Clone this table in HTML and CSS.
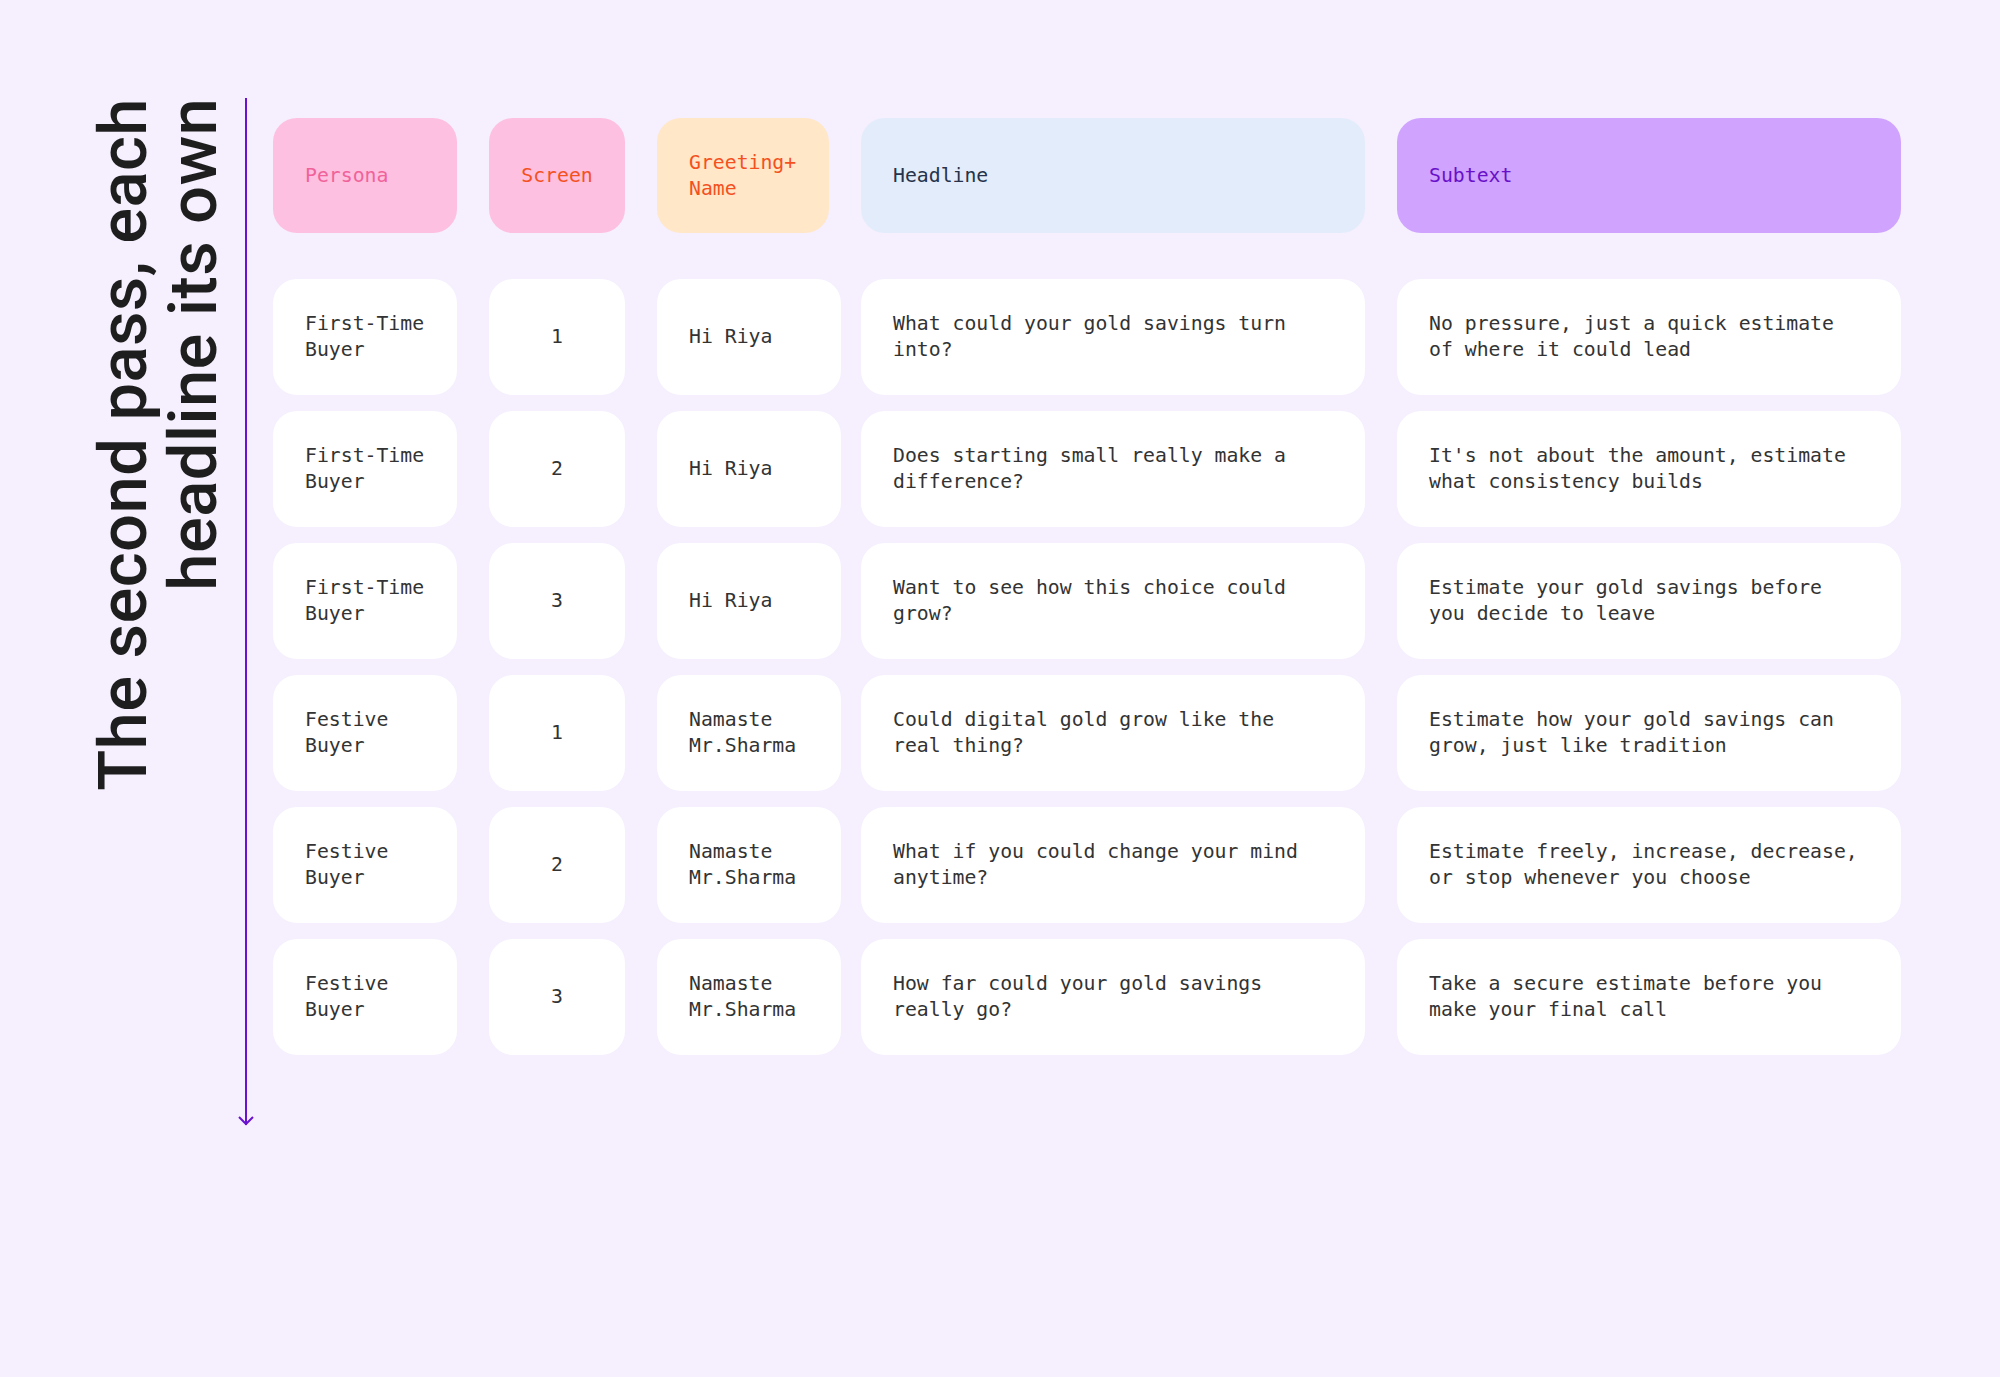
FILE: index.html
```html
<!DOCTYPE html>
<html lang="en">
<head>
<meta charset="utf-8">
<title>The second pass, each headline its own</title>
<link rel="stylesheet" href="styles.css">
</head>
<body>
<main class="page">
  <h1 class="title">The second pass, each<br>headline its own</h1>
  <svg class="axis" width="16" height="1030" viewBox="0 0 16 1030" aria-hidden="true">
    <line x1="8" y1="0" x2="8" y2="1027" stroke="#6A12CF" stroke-width="2"/>
    <polyline points="1,1019 8,1026 15,1019" fill="none" stroke="#6A12CF" stroke-width="2"/>
  </svg>
  <section class="table">
    <div class="grid head">
      <div class="cell h-persona">Persona</div>
      <div class="cell center h-screen">Screen</div>
      <div class="cell h-greet">Greeting+ Name</div>
      <div class="cell h-headline">Headline</div>
      <div class="cell h-subtext">Subtext</div>
    </div>
    <div class="grid body">
      <div class="cell">First-Time Buyer</div>
      <div class="cell center">1</div>
      <div class="cell greet">Hi Riya</div>
      <div class="cell wide">What could your gold savings turn into?</div>
      <div class="cell wide">No pressure, just a quick estimate of where it could lead</div>

      <div class="cell">First-Time Buyer</div>
      <div class="cell center">2</div>
      <div class="cell greet">Hi Riya</div>
      <div class="cell wide">Does starting small really make a difference?</div>
      <div class="cell wide">It's not about the amount, estimate what consistency builds</div>

      <div class="cell">First-Time Buyer</div>
      <div class="cell center">3</div>
      <div class="cell greet">Hi Riya</div>
      <div class="cell wide">Want to see how this choice could grow?</div>
      <div class="cell wide">Estimate your gold savings before you decide to leave</div>

      <div class="cell">Festive Buyer</div>
      <div class="cell center">1</div>
      <div class="cell greet">Namaste Mr.Sharma</div>
      <div class="cell wide">Could digital gold grow like the real thing?</div>
      <div class="cell wide">Estimate how your gold savings can grow, just like tradition</div>

      <div class="cell">Festive Buyer</div>
      <div class="cell center">2</div>
      <div class="cell greet">Namaste Mr.Sharma</div>
      <div class="cell wide">What if you could change your mind anytime?</div>
      <div class="cell wide">Estimate freely, increase, decrease, or stop whenever you choose</div>

      <div class="cell">Festive Buyer</div>
      <div class="cell center">3</div>
      <div class="cell greet">Namaste Mr.Sharma</div>
      <div class="cell wide">How far could your gold savings really go?</div>
      <div class="cell wide">Take a secure estimate before you make your final call</div>
    </div>
  </section>
</main>
</body>
</html>
```
FILE: styles.css
```css
html, body {
  margin: 0;
  padding: 0;
  background: #F5EFFE;
}
body {
  width: 2000px;
  height: 1377px;
  overflow: hidden;
}
.page {
  display: flex;
  align-items: flex-start;
  padding: 98px 0 0 88px;
}
.title {
  margin: 0;
  writing-mode: vertical-rl;
  transform: rotate(180deg);
  text-align: end;
  font-family: Roboto, "Liberation Sans", sans-serif;
  font-weight: 500;
  font-size: 67px;
  line-height: 70px;
  letter-spacing: 0.4px;
  color: #1E1E1E;
  white-space: nowrap;
}
.axis {
  display: block;
  margin-left: 10px;
}
.table {
  margin-left: 19px;
  margin-top: 20px;
}
.grid {
  display: grid;
  grid-template-columns: 184px 136px 172px 504px 504px;
  column-gap: 32px;
}
.head {
  grid-auto-rows: 115px;
  margin-bottom: 46px;
}
.body {
  grid-auto-rows: 116px;
  row-gap: 16px;
}
.cell {
  display: flex;
  align-items: center;
  box-sizing: border-box;
  padding: 0 20px 0 32px;
  border-radius: 24px;
  background: #FFFFFF;
  font-family: "DejaVu Sans Mono", "Liberation Mono", monospace;
  font-size: 19.8px;
  line-height: 26px;
  color: #333333;
}
.center {
  justify-content: center;
  padding: 0;
}
.wide {
  padding-right: 40px;
}
.greet {
  width: 184px;
}
.h-persona {
  background: #FEC0E0;
  color: #F0639A;
}
.h-screen {
  background: #FEC0E0;
  color: #F4511E;
}
.h-greet {
  background: #FFE7C8;
  color: #F4511E;
}
.h-headline {
  background: #E3ECFB;
  color: #26334A;
}
.h-subtext {
  background: #CFA3FE;
  color: #6A10C8;
}
```
